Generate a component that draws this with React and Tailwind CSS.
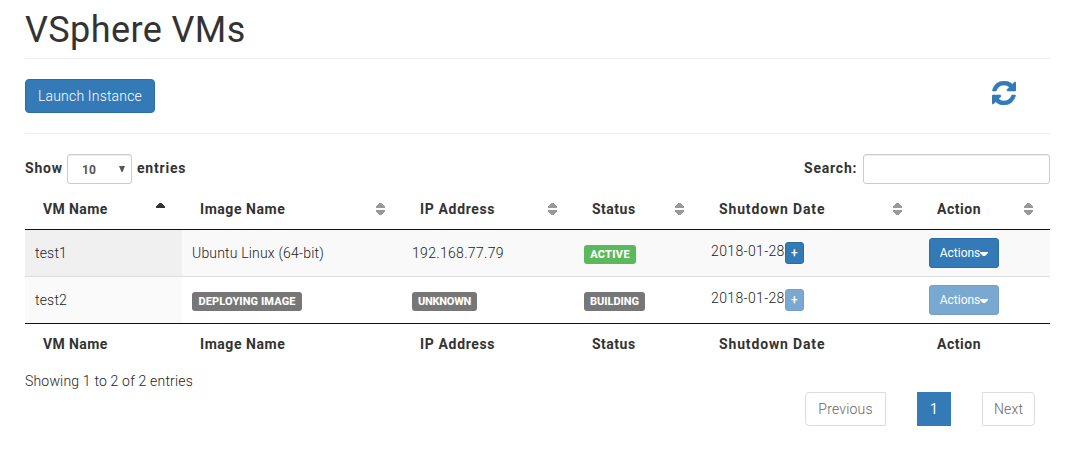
import React from "react";

const columns = [
  { label: "VM Name", width: "w-[157px]", tracking: "tracking-[0.4px]", sorted: true },
  { label: "Image Name", width: "w-[220px]", tracking: "tracking-[0.55px]" },
  { label: "IP Address", width: "w-[172px]", tracking: "tracking-[0.65px]" },
  { label: "Status", width: "w-[127px]", tracking: "tracking-[0.5px]" },
  { label: "Shutdown Date", width: "w-[218px]", tracking: "tracking-[0.85px]" },
  { label: "Action", width: "w-[131px]", tracking: "tracking-[0.55px]" },
];

function SortIcon({ sorted }) {
  return (
    <svg width="9" height="12" viewBox="0 0 9 12" shapeRendering="crispEdges" className="-mr-px shrink-0">
      <path d="M3 0H6V1H7V2H8V3H9V5H0V3H1V2H2V1H3Z" fill={sorted ? "#333" : "#999"} />
      {!sorted && <path d="M0 7H9V9H8V10H7V11H6V12H3V11H2V10H1V9H0Z" fill="#999" />}
    </svg>
  );
}

function RefreshIcon() {
  return (
    <svg width="24" height="24" viewBox="0 0 1536 1536" fill="#337ab7" stroke="#337ab7" strokeWidth="36">
      <path d="M1511 928q0 5-1 7-64 268-268 434.5t-478 166.5q-146 0-282.5-55t-243.5-157l-129 129q-19 19-45 19t-45-19-19-45v-448q0-26 19-45t45-19h448q26 0 45 19t19 45-19 45l-137 137q71 66 161 102t187 36q134 0 250-65t186-179q11-17 53-117 8-23 30-23h192q13 0 22.5 9.5t9.5 22.5zm25-800v448q0 26-19 45t-45 19h-448q-26 0-45-19t-19-45 19-45l138-138q-148-137-349-137-134 0-250 65t-186 179q-11 17-53 117-8 23-30 23h-199q-13 0-22.5-9.5t-9.5-22.5v-7q65-268 270-434.5t480-166.5q146 0 284 55.5t245 156.5l130-129q19-19 45-19t45 19 19 45z" />
    </svg>
  );
}

function Label({ children, className }) {
  return (
    <span className={`mt-0.5 flex h-[19px] items-center justify-center rounded-[3px] pt-px text-[11px] font-extrabold text-white ${className}`}>
      {children}
    </span>
  );
}

function Row({ name, image, ip, status, disabled, className, nameClass }) {
  const fade = disabled ? "opacity-65" : "";
  return (
    <div className={`flex h-[46px] ${className}`}>
      <div className={`flex w-[157px] items-center pl-2.5 ${nameClass}`}>{name}</div>
      <div className="flex w-[220px] items-center pl-2.5">{image}</div>
      <div className="flex w-[172px] items-center pl-2.5 tracking-[0.32px]">{ip}</div>
      <div className="flex w-[127px] items-center pl-2.5">{status}</div>
      <div className="flex w-[218px] items-center pl-2.5">
        <span className="w-[74px] pb-1 tracking-[0.36px] whitespace-nowrap">2018-01-28</span>
        <button className={`h-[22px] w-[19px] rounded-[3px] border border-[#2e6da4] bg-[#337ab7] text-xs leading-none font-medium text-white ${fade}`}>+</button>
      </div>
      <div className="flex w-[131px] items-center pl-2.5">
        <button className={`flex h-[30px] w-[70px] items-center justify-center rounded-[3px] border border-[#2e6da4] bg-[#337ab7] text-xs font-normal tracking-normal text-white ${fade}`}>
          Actions
          <svg width="8" height="4" viewBox="0 0 8 4" className="mt-0.5"><path d="M0 0H8V1L5 4H3L0 1Z" fill="white" /></svg>
        </button>
      </div>
    </div>
  );
}

export default function App() {
  return (
    <main className="h-[472px] w-[1074px] bg-white pr-6 pl-[25px] font-['Roboto',sans-serif] text-sm leading-5 font-light tracking-[0.18px] text-[#222]">
      <h1 className="h-[58px] pt-[10px] text-[36px] leading-10 font-normal tracking-[0.4px] text-[#333]">VSphere VMs</h1>
      <section className="flex h-[76px] items-center justify-between border-y border-[#eee] pr-[34px]">
        <button className="h-[34px] w-[130px] rounded-[4px] border border-[#2e6da4] bg-[#337ab7] text-white">Launch Instance</button>
        <div className="pb-1.5"><RefreshIcon /></div>
      </section>
      <section className="mt-5 flex h-[30px] justify-between font-bold tracking-[0.8px] text-[#333]">
        <div className="flex">
          <span className="w-[42px] pt-1">Show</span>
          <div className="flex w-[65px] items-center justify-between rounded-[3px] border border-[#ccc] pr-[6px] pl-3.5 text-xs tracking-normal text-[#555] shadow-[inset_0_1px_1px_rgba(0,0,0,0.075)]">
            <span className="pt-0.5">10</span>
            <svg width="6" height="6" viewBox="0 0 6 6"><path d="M0 0H6L3.5 6H2.5Z" fill="#555" /></svg>
          </div>
          <span className="pt-1 pl-[5px]">entries</span>
        </div>
        <div className="flex">
          <span className="w-[59px] pt-1">Search:</span>
          <input aria-label="Search" className="w-[187px] rounded-[3px] border border-[#ccc] shadow-[inset_0_1px_1px_rgba(0,0,0,0.075)]" />
        </div>
      </section>
      <section className="mt-[5px]">
        <div className="flex h-[41px] items-center border-b border-[#111] font-bold text-[#333]">
          {columns.map((c) => (
            <div key={c.label} className={`flex items-center justify-between pr-[18px] pl-[18px] ${c.width} ${c.tracking}`}>
              {c.label}
              <SortIcon sorted={c.sorted} />
            </div>
          ))}
        </div>
        <Row name="test1" image="Ubuntu Linux (64-bit)" ip="192.168.77.79" status={<Label className="w-[52px] bg-[#5cb85c] tracking-[0.3px]">ACTIVE</Label>} className="bg-[#f9f9f9]" nameClass="bg-[#f0f0f0]" />
        <div className="h-px bg-[#ddd]" />
        <Row
          name="test2"
          image={<Label className="w-[110px] bg-[#777] tracking-[0.1px]">DEPLOYING IMAGE</Label>}
          ip={<Label className="w-[65px] bg-[#777] tracking-[-0.25px]">UNKNOWN</Label>}
          status={<Label className="w-[61px] bg-[#777] tracking-normal">BUILDING</Label>}
          disabled
          nameClass="bg-[#fafafa]"
        />
        <div className="flex h-[41px] items-center border-t border-[#111] font-bold text-[#333]">
          {columns.map((c) => (
            <div key={c.label} className={`pl-[18px] ${c.width} ${c.tracking}`}>{c.label}</div>
          ))}
        </div>
      </section>
      <footer className="mt-[7px] flex justify-between">
        <span>Showing 1 to 2 of 2 entries</span>
        <nav className="mt-[21px] mr-[15px] flex h-[34px] text-[#666]">
          <button className="w-[81px] rounded-l-[4px] border border-[#ddd]">Previous</button>
          <button className="ml-[31px] w-[34px] bg-[#337ab7] font-normal text-white">1</button>
          <button className="ml-[31px] w-[53px] rounded-r-[4px] border border-[#ddd]">Next</button>
        </nav>
      </footer>
    </main>
  );
}
